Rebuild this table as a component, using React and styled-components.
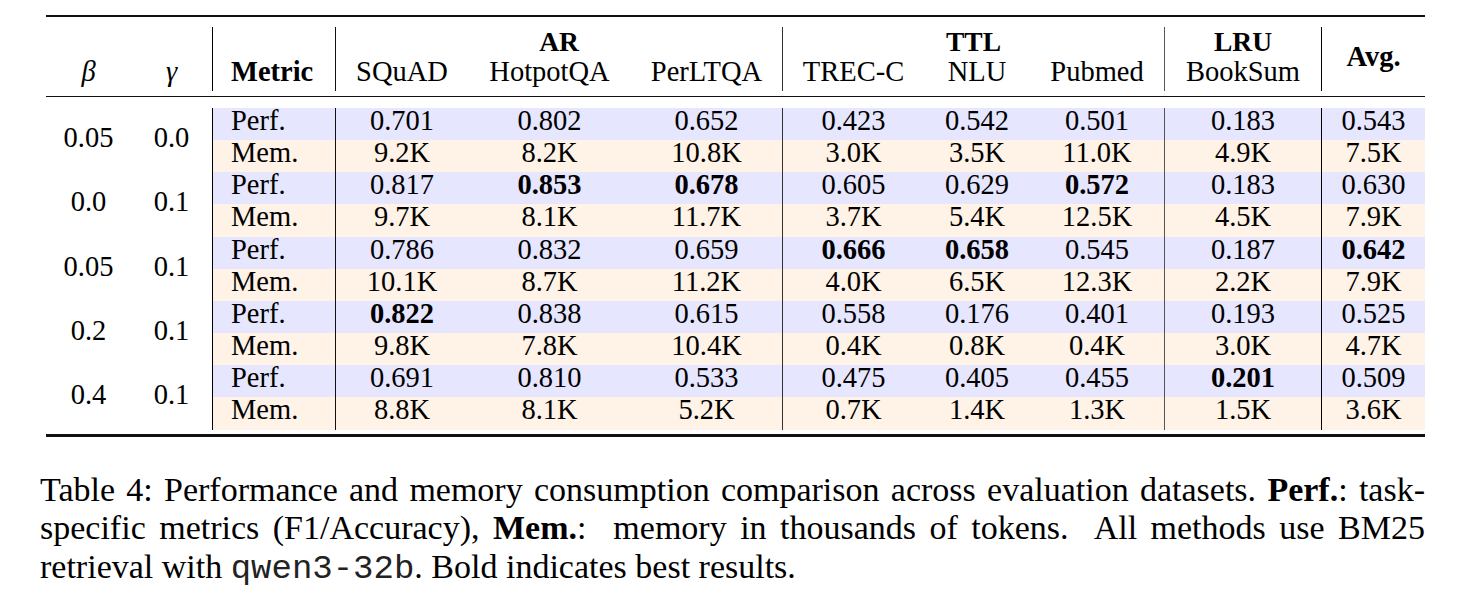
import React from 'react'
import styled, { createGlobalStyle } from 'styled-components'

const SERIF = `"Liberation Serif", "Times New Roman", serif`

const GlobalStyle = createGlobalStyle`
  html, body {
    margin: 0;
    padding: 0;
    background: #ffffff;
  }
  body {
    font-family: ${SERIF};
    color: #000;
  }
`

// column widths measured off the reference, left to right
const COLS = [85, 81, 123, 133, 163, 151, 142, 106, 134, 157, 104]
const PERF_BG = '#e6e6ff'
const MEM_BG = '#fff2e6'

// value columns that open with a vertical rule (index into the 8 values)
const RULED = { 0: '#111', 3: '#333', 6: '#555', 7: '#000' }

const GROUPS = [
  {
    beta: '0.05', gamma: '0.0', best: [],
    perf: ['0.701', '0.802', '0.652', '0.423', '0.542', '0.501', '0.183', '0.543'],
    mem: ['9.2K', '8.2K', '10.8K', '3.0K', '3.5K', '11.0K', '4.9K', '7.5K'],
  },
  {
    beta: '0.0', gamma: '0.1', best: [1, 2, 5],
    perf: ['0.817', '0.853', '0.678', '0.605', '0.629', '0.572', '0.183', '0.630'],
    mem: ['9.7K', '8.1K', '11.7K', '3.7K', '5.4K', '12.5K', '4.5K', '7.9K'],
  },
  {
    beta: '0.05', gamma: '0.1', best: [3, 4, 7],
    perf: ['0.786', '0.832', '0.659', '0.666', '0.658', '0.545', '0.187', '0.642'],
    mem: ['10.1K', '8.7K', '11.2K', '4.0K', '6.5K', '12.3K', '2.2K', '7.9K'],
  },
  {
    beta: '0.2', gamma: '0.1', best: [0],
    perf: ['0.822', '0.838', '0.615', '0.558', '0.176', '0.401', '0.193', '0.525'],
    mem: ['9.8K', '7.8K', '10.4K', '0.4K', '0.8K', '0.4K', '3.0K', '4.7K'],
  },
  {
    beta: '0.4', gamma: '0.1', best: [6],
    perf: ['0.691', '0.810', '0.533', '0.475', '0.405', '0.455', '0.201', '0.509'],
    mem: ['8.8K', '8.1K', '5.2K', '0.7K', '1.4K', '1.3K', '1.5K', '3.6K'],
  },
]

const Page = styled.div`
  padding: 15px 0 0 40px;
  width: 1400px;
  font-family: ${SERIF};
`

const Table = styled.table`
  margin-left: 6px;
  width: 1379px;
  table-layout: fixed;
  border-collapse: separate;
  border-spacing: 0;
  font-family: ${SERIF};
  font-size: 28.5px;
`

const Filler = styled.td`
  height: ${p => p.$h}px;
  padding: 0;
  font-size: 0;
  line-height: 0;
  background: ${p => p.$rule ? '#111' : 'transparent'};
`

const HeadRow = styled.tr`
  height: ${p => p.$h}px;
`

const HeadCell = styled.th`
  padding: 0 0 5px;
  font-weight: ${p => p.$bold ? 700 : 400};
  font-style: ${p => p.$italic ? 'italic' : 'normal'};
  text-align: ${p => p.$left ? 'left' : 'center'};
  padding-left: ${p => p.$left ? '18px' : '0'};
  vertical-align: bottom;
  line-height: 28px;
  white-space: nowrap;
  border-left: ${p => p.$line ? `1px solid ${p.$line}` : 'none'};
`

const GroupCell = styled.th`
  padding: 1px 0 0;
  font-size: 27.5px;
  font-weight: 700;
  line-height: 27px;
  text-align: center;
  vertical-align: top;
  border-left: ${p => p.$line ? `1px solid ${p.$line}` : 'none'};
`

const AvgCell = styled.th`
  padding: 16px 0 0;
  font-weight: 700;
  line-height: 28px;
  text-align: center;
  vertical-align: top;
  border-left: 1px solid #000;
`

const DataRow = styled.tr`
  height: 32.2px;
`

const ParamCell = styled.td`
  padding: 0 0 5px;
  text-align: center;
  vertical-align: middle;
  line-height: 25px;
`

const MetricCell = styled.td`
  padding: 0 0 0 18px;
  line-height: 25px;
  vertical-align: top;
  text-align: left;
  background: ${p => p.$tone === 'perf' ? PERF_BG : MEM_BG};
  border-left: 1px solid #000;
`

const ValueCell = styled.td`
  padding: 0;
  line-height: 25px;
  vertical-align: top;
  text-align: center;
  font-weight: ${p => p.$bold ? 700 : 400};
  background: ${p => p.$tone === 'perf' ? PERF_BG : MEM_BG};
  border-left: ${p => p.$line ? `1px solid ${p.$line}` : 'none'};
`

const Caption = styled.div`
  margin-top: 33.5px;
  width: 1385px;
  font-family: ${SERIF};
  font-size: 34px;
  line-height: 38.5px;
`

const CaptionLine = styled.div`
  white-space: nowrap;
  text-align: ${p => p.$justify ? 'justify' : 'left'};
  text-align-last: ${p => p.$justify ? 'justify' : 'left'};
`

const Mono = styled.span`
  font-family: "Liberation Mono", "Courier New", monospace;
  font-size: 34px;
  color: #222;
`

function ValuesRow({ label, tone, values, best }) {
  return values.map((v, i) => (
    <ValueCell key={`${label}-${i}`} $tone={tone} $line={RULED[i]} $bold={best.includes(i)}>
      {v}
    </ValueCell>
  ))
}

export default function App() {
  return (
    <Page>
      <GlobalStyle />
      <Table>
        <colgroup>
          {COLS.map((w, i) => <col key={i} style={{ width: w }} />)}
        </colgroup>
        <thead>
          <tr><Filler colSpan={11} $h={2} $rule /></tr>
          <tr><Filler colSpan={11} $h={10.3} /></tr>
          <HeadRow $h={30.7}>
            <HeadCell rowSpan={2} $italic>β</HeadCell>
            <HeadCell rowSpan={2} $italic>γ</HeadCell>
            <HeadCell rowSpan={2} $bold $left $line="#000">Metric</HeadCell>
            <GroupCell colSpan={3} $line="#111">AR</GroupCell>
            <GroupCell colSpan={3} $line="#333">TTL</GroupCell>
            <GroupCell $line="#555">LRU</GroupCell>
            <AvgCell rowSpan={2}>Avg.</AvgCell>
          </HeadRow>
          <HeadRow $h={33}>
            <HeadCell $line="#111">SQuAD</HeadCell>
            <HeadCell>HotpotQA</HeadCell>
            <HeadCell>PerLTQA</HeadCell>
            <HeadCell $line="#333">TREC-C</HeadCell>
            <HeadCell>NLU</HeadCell>
            <HeadCell>Pubmed</HeadCell>
            <HeadCell $line="#555">BookSum</HeadCell>
          </HeadRow>
          <tr><Filler colSpan={11} $h={5} /></tr>
          <tr><Filler colSpan={11} $h={1.5} $rule /></tr>
          <tr><Filler colSpan={11} $h={10.3} /></tr>
        </thead>
        <tbody>
          {GROUPS.map((g, gi) => (
            <React.Fragment key={gi}>
              <DataRow>
                <ParamCell rowSpan={2}>{g.beta}</ParamCell>
                <ParamCell rowSpan={2}>{g.gamma}</ParamCell>
                <MetricCell $tone="perf">Perf.</MetricCell>
                <ValuesRow label={`p${gi}`} tone="perf" values={g.perf} best={g.best} />
              </DataRow>
              <DataRow>
                <MetricCell $tone="mem">Mem.</MetricCell>
                <ValuesRow label={`m${gi}`} tone="mem" values={g.mem} best={[]} />
              </DataRow>
            </React.Fragment>
          ))}
          <tr><Filler colSpan={11} $h={4.5} /></tr>
          <tr><Filler colSpan={11} $h={3} $rule /></tr>
        </tbody>
      </Table>

      <Caption>
        <CaptionLine $justify>
          Table 4: Performance and memory consumption comparison across evaluation datasets. <b>Perf.</b>: task-
        </CaptionLine>
        <CaptionLine $justify>
          specific metrics (F1/Accuracy), <b>Mem.</b>:&nbsp; memory in thousands of tokens.&nbsp; All methods use BM25
        </CaptionLine>
        <CaptionLine>
          retrieval with <Mono>qwen3-32b</Mono>. Bold indicates best results.
        </CaptionLine>
      </Caption>
    </Page>
  )
}
